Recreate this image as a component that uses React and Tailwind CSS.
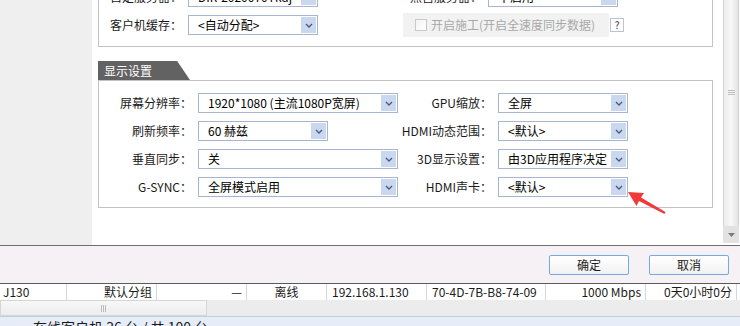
import React from "react";

const font = "font-['Noto_Sans_CJK_SC',sans-serif]";

function Chevron() {
  return (
    <svg width="8" height="5" viewBox="0 0 8 5">
      <path d="M1 1 L4 4 L7 1" fill="none" stroke="#4a5a78" strokeWidth="1.3" />
    </svg>
  );
}

function Select({ value, w, grey }) {
  return (
    <div
      className={`flex h-[20px] ${w} shrink-0 items-stretch border border-[#a6b6cf] bg-white`}
    >
      <div className={`flex-1 truncate pl-[9px] text-[12px] leading-[18px] ${grey ? "text-[#333]" : "text-black"}`}>
        {value}
      </div>
      <div className="m-px flex w-[15px] items-center justify-center bg-[#c9d8ef]">
        <Chevron />
      </div>
    </div>
  );
}

function Label({ text, w }) {
  return (
    <div className={`${w} shrink-0 pr-[6px] text-right text-[12px] leading-[20px] text-[#1a1a1a]`}>
      {text}
    </div>
  );
}

const rows = [
  ["屏幕分辨率：", "1920*1080 (主流1080P宽屏)", "w-[200px]", "GPU缩放：", "全屏"],
  ["刷新频率：", "60 赫兹", "w-[130px]", "HDMI动态范围：", "<默认>"],
  ["垂直同步：", "关", "w-[200px]", "3D显示设置：", "由3D应用程序决定"],
  ["G-SYNC：", "全屏模式启用", "w-[200px]", "HDMI声卡：", "<默认>"],
];

const cells = [
  { w: "w-[67px]", t: "J130", a: "text-left pl-[3px]" },
  { w: "w-[90px]", t: "默认分组", a: "text-right pr-[4px]" },
  { w: "w-[90px]", t: "—", a: "text-right pr-[4px]" },
  { w: "w-[80px]", t: "离线", a: "text-center" },
  { w: "w-[100px]", t: "192.168.1.130", a: "text-left pl-[5px]" },
  { w: "w-[119px]", t: "70-4D-7B-B8-74-09", a: "text-left pl-[5px]" },
  { w: "w-[100px]", t: "1000 Mbps", a: "text-right pr-[4px]" },
  { w: "w-[91px]", t: "0天0小时0分", a: "text-right pr-[4px]" },
];

export default function App() {
  return (
    <div className={`relative h-[326px] w-[740px] overflow-hidden bg-white ${font}`}>
      {/* upper settings area */}
      <div className="flex h-[245px]">
        <div className="w-[92px] shrink-0 bg-[#efefef]" />
        <div className="relative w-[631px] shrink-0 overflow-hidden bg-white pl-[6px]">
          {/* first group (cut at top) */}
          <div className="-mt-[35px] w-[615px] border border-t-0 border-[#c3c3c3] pb-[9px] pt-[22px]">
            <div className="flex items-center">
              <Label text="自定服务器：" w="w-[89px]" />
              <Select value="DIR-2020070Tkdj" w="w-[130px]" />
              <Label text="照营服务器：" w="w-[170px]" />
              <Select value="不启用" w="w-[130px]" />
            </div>
            <div className="mt-[6px] flex items-center">
              <Label text="客户机缓存：" w="w-[89px]" />
              <Select value="<自动分配>" w="w-[130px]" />
              <div className="ml-[85px] flex h-[24px] w-[206px] items-center bg-[#f2f2f2] pl-[12px]">
                <div className="h-[12px] w-[12px] border border-[#c8c8c8] bg-gradient-to-br from-[#f4f4f4] to-white" />
                <span className="ml-[4px] text-[12px] text-[#a8a8a8]">开启施工(开启全速度同步数据)</span>
              </div>
              <div className="ml-[1px] flex h-[14px] w-[14px] items-center justify-center border border-[#b8c4d4] bg-white text-[10px] leading-none text-[#333]">
                ?
              </div>
            </div>
          </div>

          {/* display settings tab */}
          <div className="mt-[14px] flex h-[19px] w-[92px] items-center bg-[#626262] pl-[6px] text-[12px] text-white [clip-path:polygon(0_0,86%_0,100%_100%,0_100%)]">
            显示设置
          </div>
          <div className="w-[615px] border border-[#c3c3c3] pb-[10px] pt-[12px]">
            {rows.map(([l1, v1, w1, l2, v2], i) => (
              <div key={i} className={`flex items-center ${i ? "mt-[8px]" : ""}`}>
                <Label text={l1} w="w-[99px]" />
                <div className="w-[200px] shrink-0">
                  <Select value={v1} w={w1} />
                </div>
                <Label text={l2} w="w-[100px]" />
                <Select value={v2} w="w-[130px]" />
              </div>
            ))}
          </div>
        </div>

        {/* vertical scrollbar */}
        <div className="flex w-[16px] shrink-0 flex-col">
          <div className="relative flex-1 border-x border-[#d4d4d4] bg-gradient-to-r from-[#ececec] via-[#f8f8f8] to-[#e4e4e4]">
            <div className="absolute left-[4px] top-[90px] flex w-[7px] flex-col gap-[1px]">
              <div className="h-px bg-[#bdbdbd]" />
              <div className="h-px bg-[#bdbdbd]" />
              <div className="h-px bg-[#bdbdbd]" />
            </div>
          </div>
          <div className="flex h-[17px] items-center justify-center bg-[#e2e2e2]">
            <svg width="7" height="4" viewBox="0 0 7 4">
              <path d="M0 0 H7 L3.5 4 Z" fill="#7a7a7a" />
            </svg>
          </div>
          <div className="h-[2px]" />
        </div>
        <div className="flex-1 bg-white" />
      </div>

      {/* dialog footer */}
      <div className="flex h-[38px] items-center justify-end gap-[20px] border-t border-[#6f6f6f] bg-[#f6f1f5] pr-[11px]">
        <button className="h-[20px] w-[80px] rounded-[2px] border border-[#72a9e6] bg-gradient-to-b from-white to-[#f2f2f2] text-[12px] text-[#1a1a1a]">
          确定
        </button>
        <button className="h-[20px] w-[80px] rounded-[2px] border border-[#72a9e6] bg-gradient-to-b from-white to-[#f2f2f2] text-[12px] text-[#1a1a1a]">
          取消
        </button>
      </div>

      {/* table row */}
      <div className="flex h-[17px] border-t border-[#5a5a5a] bg-white">
        {cells.map((c, i) => (
          <div
            key={i}
            className={`${c.w} shrink-0 border-r border-[#cfd8e2] text-[12px] leading-[16px] text-[#1a1a1a] ${c.a}`}
          >
            {c.t}
          </div>
        ))}
      </div>

      {/* horizontal scrollbar */}
      <div className="flex h-[16px] bg-[#ececec]">
        <div className="flex w-[207px] items-center justify-center border border-[#d6d6d6] bg-gradient-to-b from-[#f8f8f8] to-[#ededed]">
          <div className="flex gap-[1px]">
            <div className="h-[7px] w-px bg-[#bcbcbc]" />
            <div className="h-[7px] w-px bg-[#bcbcbc]" />
            <div className="h-[7px] w-px bg-[#bcbcbc]" />
          </div>
        </div>
      </div>

      {/* status bar */}
      <div className="h-[12px] border-t border-[#c3cde0] bg-[#e6edf8] pl-[33px] pt-[1px] text-[14px] leading-[18px] text-[#1a1a1a]">
        在线客户机 36 台 / 共 100 台
      </div>

      {/* red pointer arrow */}
      <svg className="absolute left-[620px] top-[186px]" width="50" height="32" viewBox="0 0 50 32">
        <path d="M8 6 L24 7 L21 11.5 L45.5 26 L44.5 28 L19 15 L16.5 20 Z" fill="#f0393a" />
      </svg>
    </div>
  );
}
